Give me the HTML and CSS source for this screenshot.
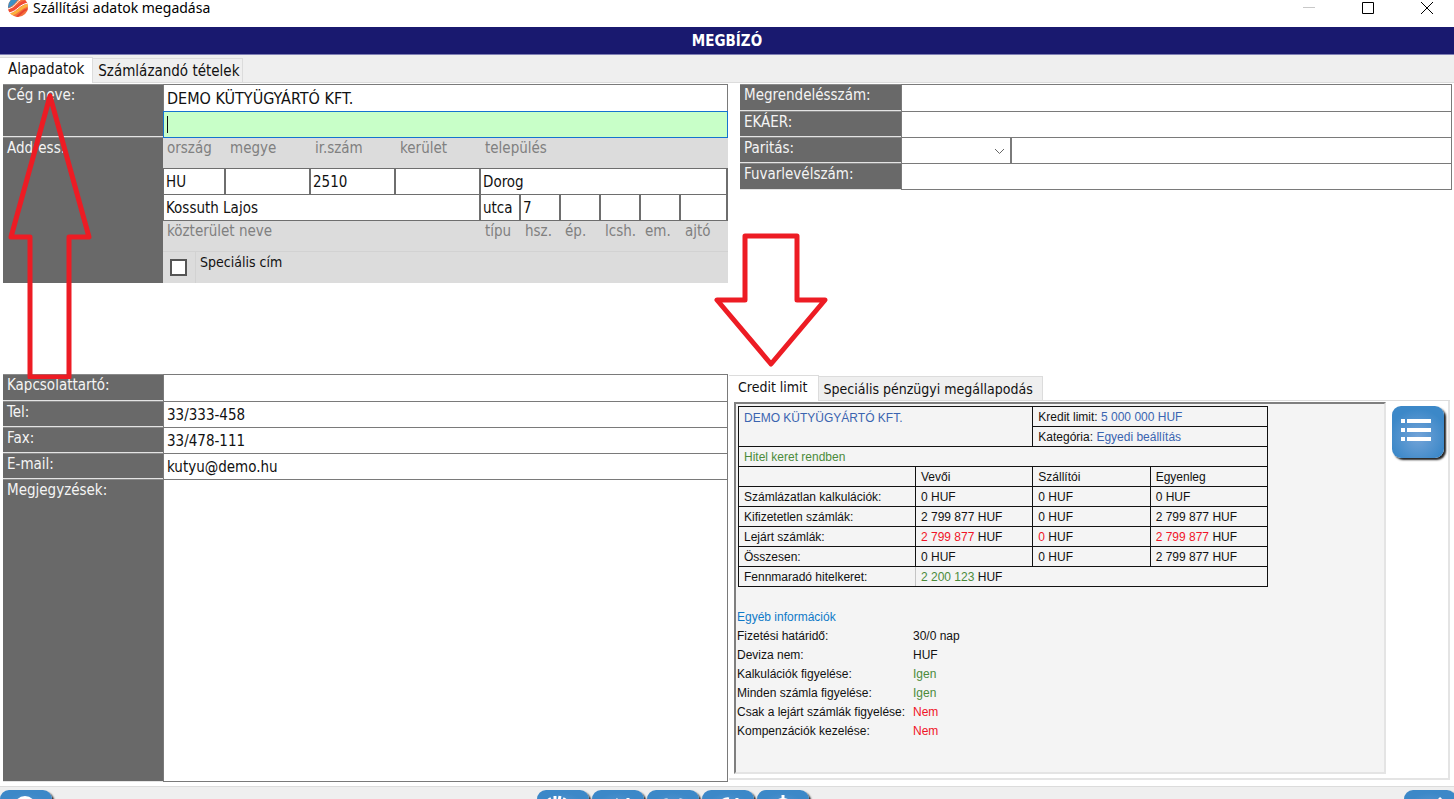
FILE: index.html
```html
<!DOCTYPE html>
<html lang="hu">
<head>
<meta charset="utf-8">
<title>Szállítási adatok megadása</title>
<link rel="stylesheet" href="styles.css">
</head>
<body>
<header class="titlebar">
  <svg class="app-icon" viewBox="0 0 20 20" width="20" height="20" aria-hidden="true">
    <defs><clipPath id="ball"><circle cx="10" cy="7" r="10"/></clipPath></defs>
    <g clip-path="url(#ball)">
      <rect width="20" height="20" fill="#f4703c"/>
      <path d="M0-3H14C8 0 8 5 0 8Z" fill="#3d8fc4"/>
      <path d="M-1 9C8 8 7 1 16-2" fill="none" stroke="#fff" stroke-width="1"/>
      <path d="M0 11C10 10 9 3 20 1" fill="none" stroke="#f04a35" stroke-width="3"/>
      <path d="M2 15C11 13 11 7 20 5" fill="none" stroke="#fbb13c" stroke-width="3"/>
      <path d="M1 13C10 11 10 5 20 3" fill="none" stroke="#fff" stroke-width="1"/>
      <path d="M6 18C13 16 13 10 20 9" fill="none" stroke="#e8452f" stroke-width="2"/>
    </g>
  </svg>
  <span class="window-title">Szállítási adatok megadása</span>
  <button class="win-btn dim" aria-label="Kis méret"><svg width="12" height="12" viewBox="0 0 12 12"><path d="M0 5.500H12"/></svg></button>
  <button class="win-btn" aria-label="Teljes méret"><svg width="12" height="12" viewBox="0 0 12 12"><path d="M.5.5H11.500V11.500H.5Z"/></svg></button>
  <button class="win-btn" aria-label="Bezárás"><svg width="12" height="12" viewBox="0 0 12 12"><path d="M0 0L12 12M12 0L0 12"/></svg></button>
</header>
<h1 class="banner">MEGBÍZÓ</h1>
<nav class="tabs" role="tablist">
  <button class="tab active" role="tab" aria-selected="true">Alapadatok</button>
  <button class="tab" role="tab" aria-selected="false">Számlázandó tételek</button>
</nav>

<main class="page">
  <section class="company">
    <div class="caption-col">
      <label class="caption name-caption" for="name1">Cég neve:</label>
      <div class="caption grow">Address:</div>
    </div>
    <div class="company-fields">
      <input class="field padded company-name" id="name1" value="DEMO KÜTYÜGYÁRTÓ KFT.">
      <div class="focus-wrap"><input class="field focused" aria-label="Cég neve, második sor"><span class="caret"></span></div>
      <div class="address">
        <label class="hint" for="country">ország</label>
        <label class="hint" for="county">megye</label>
        <label class="hint" for="zip">ir.szám</label>
        <label class="hint" for="district">kerület</label>
        <label class="hint span6" for="city">település</label>
        <input class="field first" id="country" value="HU">
        <input class="field" id="county">
        <input class="field" id="zip" value="2510">
        <input class="field" id="district">
        <input class="field span6" id="city" value="Dorog">
        <input class="field first span4" id="street" value="Kossuth Lajos">
        <input class="field" id="kind" value="utca">
        <input class="field" id="number" value="7">
        <input class="field" id="building">
        <input class="field" id="stair">
        <input class="field" id="floor">
        <input class="field" id="door">
        <label class="hint span4" for="street">közterület neve</label>
        <label class="hint" for="kind">típu</label>
        <label class="hint" for="number">hsz.</label>
        <label class="hint" for="building">ép.</label>
        <label class="hint" for="stair">lcsh.</label>
        <label class="hint" for="floor">em.</label>
        <label class="hint" for="door">ajtó</label>
      </div>
      <div class="special">
        <span class="check-cell"><input type="checkbox" class="check" id="special"></span>
        <label class="special-label" for="special">Speciális cím</label>
      </div>
    </div>
  </section>

  <section class="order">
    <label class="caption" for="orderno">Megrendelésszám:</label>
    <input class="field" id="orderno">
    <label class="caption" for="ekaer">EKÁER:</label>
    <input class="field" id="ekaer">
    <label class="caption" for="parity">Paritás:</label>
    <div class="parity">
      <div class="select-wrap">
        <select class="field" id="parity"><option></option></select>
        <svg class="chevron" width="11" height="7" viewBox="0 0 11 7" aria-hidden="true"><path d="M1 1L5.500 5.500L10 1"/></svg>
      </div>
      <input class="field" aria-label="Paritás helye">
    </div>
    <label class="caption" for="waybill">Fuvarlevélszám:</label>
    <input class="field" id="waybill">
  </section>

  <section class="contact">
    <label class="caption" for="person">Kapcsolattartó:</label>
    <input class="field padded" id="person">
    <label class="caption" for="tel">Tel:</label>
    <input class="field padded" id="tel" value="33/333-458">
    <label class="caption" for="fax">Fax:</label>
    <input class="field padded" id="fax" value="33/478-111">
    <label class="caption" for="email">E-mail:</label>
    <input class="field padded" id="email" value="kutyu@demo.hu">
    <label class="caption" for="notes">Megjegyzések:</label>
    <textarea class="field notes" id="notes"></textarea>
  </section>

  <section class="credit">
    <nav class="tabs credit-tabs" role="tablist">
      <button class="tab active" role="tab" aria-selected="true">Credit limit</button>
      <button class="tab" role="tab" aria-selected="false">Speciális pénzügyi megállapodás</button>
    </nav>
    <div class="credit-body">
      <div class="report">
        <table class="limits">
          <colgroup><col class="c-name"><col class="c-val"><col class="c-val"><col class="c-val"></colgroup>
          <tr><td colspan="2" rowspan="2" class="blue top">DEMO KÜTYÜGYÁRTÓ KFT.</td><td colspan="2">Kredit limit: <span class="blue">5 000 000 HUF</span></td></tr>
          <tr><td colspan="2">Kategória: <span class="blue">Egyedi beállítás</span></td></tr>
          <tr><td colspan="4" class="green">Hitel keret rendben</td></tr>
          <tr><td></td><td>Vevői</td><td>Szállítói</td><td>Egyenleg</td></tr>
          <tr><td>Számlázatlan kalkulációk:</td><td>0 HUF</td><td>0 HUF</td><td>0 HUF</td></tr>
          <tr><td>Kifizetetlen számlák:</td><td>2 799 877 HUF</td><td>0 HUF</td><td>2 799 877 HUF</td></tr>
          <tr><td>Lejárt számlák:</td><td><span class="red">2 799 877</span> HUF</td><td><span class="red">0</span> HUF</td><td><span class="red">2 799 877</span> HUF</td></tr>
          <tr><td>Összesen:</td><td>0 HUF</td><td>0 HUF</td><td>2 799 877 HUF</td></tr>
          <tr><td class="pale-right">Fennmaradó hitelkeret:</td><td colspan="3"><span class="green">2 200 123</span> HUF</td></tr>
        </table>
        <h2 class="info-title">Egyéb információk</h2>
        <dl class="info">
          <dt>Fizetési határidő:</dt><dd>30/0 nap</dd>
          <dt>Deviza nem:</dt><dd>HUF</dd>
          <dt>Kalkulációk figyelése:</dt><dd class="green">Igen</dd>
          <dt>Minden számla figyelése:</dt><dd class="green">Igen</dd>
          <dt>Csak a lejárt számlák figyelése:</dt><dd class="red">Nem</dd>
          <dt>Kompenzációk kezelése:</dt><dd class="red">Nem</dd>
        </dl>
      </div>
      <button class="tool" aria-label="Lista">
        <svg width="52" height="52" viewBox="0 0 52 52"><path class="solid" d="M9 13h4v4H9zM15 13h24v4H15zM9 22h4v4H9zM15 22h24v4H15zM9 31h4v4H9zM15 31h24v4H15z"/></svg>
      </button>
    </div>
  </section>

  <svg class="arrow arrow-up" width="86" height="296" viewBox="0 0 86 296" aria-hidden="true"><path d="M43 13L82 154H62V294H23V154H4Z"/></svg>
  <svg class="arrow arrow-down" width="116" height="138" viewBox="0 0 116 138" aria-hidden="true"><path d="M32 5H84V69H112L58 133L4 69H32Z"/></svg>
</main>

<footer class="toolbar">
  <button class="tool" aria-label="Keresés"><svg width="52" height="52" viewBox="0 0 52 52"><circle class="solid" cx="25" cy="17" r="11"/></svg></button>
  <div class="tool-group">
    <button class="tool" aria-label="Beállítások"><svg width="52" height="52" viewBox="0 0 52 52"><path class="line" d="M14 12L12 8M18 10V6M22 11L23 6M26 12L28 8"/><circle class="solid" cx="20" cy="19" r="10"/></svg></button>
    <button class="tool" aria-label="Szerkesztés"><svg width="52" height="52" viewBox="0 0 52 52"><path class="line" d="M36 8V30M26 9L14 24"/></svg></button>
    <button class="tool" aria-label="Kapcsolat"><svg width="52" height="52" viewBox="0 0 52 52"><path class="line" d="M15 12Q20 7 24 14M30 14Q33 7 37 12"/></svg></button>
    <button class="tool" aria-label="Előzmény"><svg width="52" height="52" viewBox="0 0 52 52"><path class="line" d="M17 15Q21 8 27 9M35 8L34 20"/></svg></button>
    <button class="tool" aria-label="Pénzügy"><svg width="52" height="52" viewBox="0 0 52 52"><path class="line" d="M26 5V14"/><circle class="solid" cx="26" cy="20" r="12"/></svg></button>
  </div>
  <button class="tool" aria-label="Tovább"><svg width="52" height="52" viewBox="0 0 52 52"><path class="line" d="M35 8L44 17L35 26"/></svg></button>
</footer>
</body>
</html>
```

FILE: styles.css
```css
* { box-sizing: border-box; }

body {
  margin: 0;
  height: 100vh;
  overflow: hidden;
  display: flex;
  flex-direction: column;
  background: #fff;
  color: #111;
  font: 15px/20px "DejaVu Sans Condensed", "Noto Sans", sans-serif;
}

button, input, select, textarea { font: inherit; color: inherit; margin: 0; }
button { border: 0; padding: 0; background: none; }

/* Window frame */
.titlebar {
  flex: none;
  display: flex;
  align-items: flex-start;
  height: 27px;
  padding: 0 15px 0 8px;
  font: 14px/16px "Noto Sans", sans-serif;
  color: #000;
}
.app-icon { margin-right: 5px; }
.window-title { flex: 1; }
.win-btn { width: 59px; height: 16px; padding: 2px 6px; text-align: right; line-height: 0; }
.win-btn svg { fill: none; stroke: #000; stroke-width: 1; }
.win-btn.dim svg { stroke: #c8c8c8; }

.banner {
  flex: none;
  margin: 0;
  padding: 4px 0 3px;
  border-bottom: 1px solid #7f7fb4;
  background: #19196f;
  color: #fff;
  font-size: 15px;
  line-height: 20px;
  text-align: center;
}

.tabs {
  flex: none;
  display: flex;
  align-items: flex-end;
  height: 28px;
  background: #efefef;
  border-bottom: 1px solid #dcdcdc;
}
.tab {
  height: 24px;
  padding: 0 3px 0 5px;
  border: 1px solid #dcdcdc;
  border-width: 1px 1px 0 0;
  background: #efefef;
  line-height: 20px;
  white-space: nowrap;
}
.tab.active {
  height: 26px;
  margin-bottom: -1px;
  padding: 0 8px 3px;
  background: #fff;
}

/* Form page */
.page {
  position: relative;
  flex: 1;
  min-height: 0;
  display: grid;
  grid-template-columns: 725fr 726fr;
  grid-template-rows: 290px 1fr;
  padding: 1px 0 4px 3px;
}

.caption {
  padding: 0 4px;
  background: #696969;
  border-top: 1px solid #8a8a8a;
  border-bottom: 1px solid #e4e4e4;
  color: #f4f4f4;
}
.field {
  display: block;
  width: 100%;
  min-width: 0;
  height: 100%;
  padding: 0 2px;
  border: 1px solid #7a7a7a;
  border-width: 1px 1px 0 1px;
  border-radius: 0;
  background: #fff;
  outline: 0;
}
.field.padded { padding: 0 3px; }
.company-name { font-size: 16px; }

.company {
  align-self: start;
  display: grid;
  grid-template-columns: 160px 1fr;
}
.caption-col { display: flex; flex-direction: column; }
.name-caption { height: 53px; }
.grow { flex: 1; border-bottom: 0; }
.company-fields {
  display: grid;
  grid-template-rows: 27px 27px auto auto;
}
.focus-wrap { position: relative; }
.field.focused { border: 1px solid #1673cf; background: #c8ffc8; }
.caret { position: absolute; left: 4px; top: 5px; width: 1px; height: 17px; background: #111; }

.address {
  display: grid;
  grid-template-columns: 63px 85px 85px 85px repeat(5, 40px) 1fr;
  grid-template-rows: 30px 26px 27px 30px;
  background: #dcdcdc;
  border-bottom: 1px solid #d2d2d2;
}
.address .field { border-right-width: 2px; border-left-width: 0; border-color: #6e6e6e; }
.address .field.first { border-left-width: 1px; }
.address .field:nth-of-type(n+6) { border-bottom-width: 1px; }
.hint { padding-left: 4px; color: #808080; white-space: nowrap; }
.span4 { grid-column: span 4; }
.span6 { grid-column: span 6; }

.special { display: flex; height: 31px; background: #dcdcdc; }
.check-cell { width: 33px; padding: 7px; border-right: 1px solid #d2d2d2; }
.check {
  appearance: none;
  display: block;
  width: 17px;
  height: 17px;
  border: 2px solid #555;
  background: #fff;
}
.special-label { padding-left: 4px; font-size: 14px; }

.order {
  align-self: start;
  display: grid;
  grid-template-columns: 161px 1fr;
  grid-template-rows: 27px 26px 26px 27px;
  margin: 0 2px 0 12px;
}
.order > .field:last-child { border-bottom-width: 1px; }
.parity { display: grid; grid-template-columns: 110px 1fr; }
.select-wrap { position: relative; }
.select-wrap .field { appearance: none; }
.chevron { position: absolute; right: 6px; top: 11px; fill: none; stroke: #666; stroke-width: 1; }

.contact {
  display: grid;
  grid-template-columns: 160px 1fr;
  grid-template-rows: 27px 26px 26px 26px 1fr;
}
.notes { border-bottom-width: 1px; resize: none; }

/* Credit panel */
.credit {
  display: flex;
  flex-direction: column;
  min-width: 0;
  margin: 0 4px 2px 1px;
}
.credit-tabs { height: 27px; background: #fff; font-size: 14px; }
.credit-tabs .tab { padding-right: 9px; }
.credit-tabs .tab.active { padding: 0 10px 4px 9px; }
.credit-body {
  flex: 1;
  display: flex;
  align-items: stretch;
  padding: 1px 4px 4px 5px;
  border-right: 2px solid #e4e4e4;
  border-bottom: 2px solid #e4e4e4;
}
.report {
  flex: 1;
  min-width: 0;
  margin-right: 6px;
  padding: 2px 0 0 1px;
  border: 2px solid #e4e4e4;
  border-top-color: #7f7f7f;
  border-left-color: #7f7f7f;
  background: #f4f4f4;
  font: 12px/16px "Liberation Sans", Arial, sans-serif;
}
.limits {
  width: 530px;
  margin-left: 1px;
  border-collapse: collapse;
  table-layout: fixed;
}
.c-name { width: 177px; }
.limits td { height: 20px; padding: 1px 5px; border: 1px solid #111; white-space: nowrap; }
.limits .top { padding-top: 3px; vertical-align: top; }
.limits .pale-right { border-right-color: #c4c4c4; }
.blue { color: #3a64b0; }
.green { color: #4b8b3b; }
.red { color: #f01428; }
.info-title { margin: 21px 0 0; font-size: 12px; font-weight: 400; line-height: 19px; color: #0f7ac8; }
.info { display: grid; grid-template-columns: 176px 1fr; margin: 0; line-height: 19px; }
.info dd { margin: 0; }

.tool {
  flex: none;
  width: 52px;
  height: 52px;
  margin-top: 4px;
  border-radius: 9px;
  background: radial-gradient(circle at 50% 60%, #74a4d8, #3c88c8 70%);
  box-shadow: 2px 2px 2px #222;
  line-height: 0;
}
.tool .solid { fill: #fff; }
.tool .line { fill: none; stroke: #fff; stroke-width: 3; }

.toolbar {
  flex: none;
  display: grid;
  grid-template-columns: 52px 484fr auto 594fr 50px;
  height: 13px;
  overflow: hidden;
  border-top: 1px solid #dcdcdc;
  background: #efefef;
}
.toolbar .tool { margin-top: 3px; }
.toolbar > .tool:last-child { grid-column: 5; }
.tool-group { grid-column: 3; display: flex; gap: 3px; }

/* Red pointers over the form */
.arrow { position: absolute; fill: none; stroke: #ed1c24; stroke-width: 5; stroke-linejoin: round; pointer-events: none; }
.arrow-up { left: 7px; top: 0; }
.arrow-down { left: 713px; top: 148px; }
```
